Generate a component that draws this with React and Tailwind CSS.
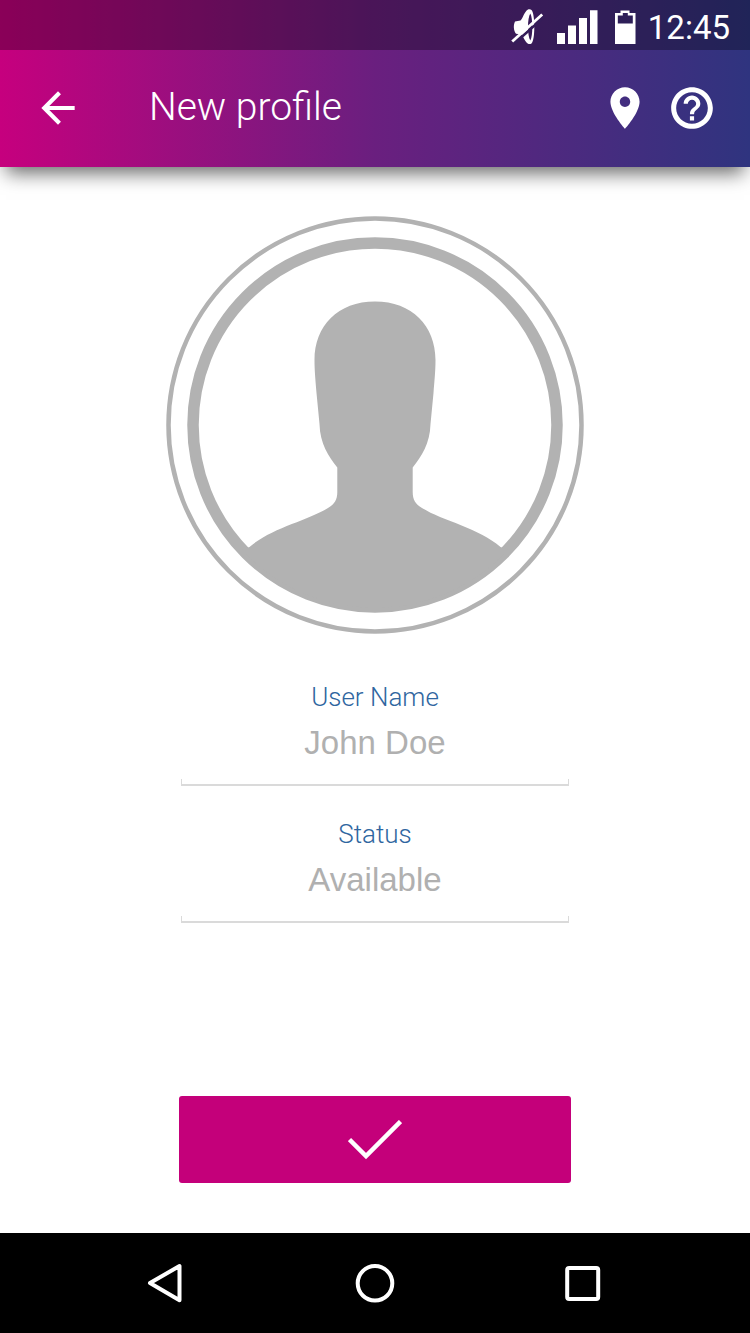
import React from "react";

function MuteIcon() {
  return (
    <svg viewBox="0 0 34 36" className="h-9 w-[34px]" aria-hidden="true">
      <path
        fill="white"
        fillRule="evenodd"
        d="M4 12.500L9.500 11.500C12 9.500 13 3 17 .6C18 .2 19.500 .2 20.500 1C22.500 3.500 23.300 10 23.300 18C23.300 26 22.500 32 20.500 34.500C19.500 35.200 18 35.200 17 34.700C13.500 32.500 12.500 27.500 10.500 25.500L5 24.800C2.500 21.500 2.200 16 4 12.500ZM19.300 4.500C17.800 7 17 12 17 18C17 24 17.800 29 19.300 31.500C20.700 29 21.300 24 21.300 18C21.300 12 20.700 7 19.300 4.500Z"
      />
      <path d="M2.800 35L33 8" stroke="#351d59" strokeWidth="2.500" />
      <path d="M1.200 32.500L31.200 5.500" stroke="white" strokeWidth="2.800" />
    </svg>
  );
}

function SignalIcon() {
  return (
    <svg viewBox="0 0 41 34" className="h-[34px] w-[41px]" fill="white" aria-hidden="true">
      <path d="M0 23h8v11H0zM11 15.500h8V34h-8zM22 8h8v26h-8zM33 0.300h7.500V34H33z" />
    </svg>
  );
}

function BatteryIcon() {
  return (
    <svg viewBox="0 0 21 34" className="h-[34px] w-[21px]" fill="white" fillRule="evenodd" aria-hidden="true">
      <path d="M5.500 0.500h9v2.500h6V34H0V3h5.500zM2.800 5.500v8h15v-8h-5V3h-5v2.500z" />
    </svg>
  );
}

function StatusBar() {
  return (
    <div className="flex h-[50px] items-center justify-end bg-black/30 pt-1 pr-5 text-white">
      <MuteIcon />
      <div className="ml-3 flex items-center gap-[17px]">
        <SignalIcon />
        <BatteryIcon />
      </div>
      <time className="ml-3 font-['Roboto',sans-serif] text-[33px] leading-none">12:45</time>
    </div>
  );
}

function Toolbar() {
  return (
    <header className="flex h-[117px] items-center px-[33px] pb-0.5 text-white">
      <button type="button" aria-label="Back">
        <svg viewBox="0 0 24 24" className="size-[50px]" fill="currentColor" aria-hidden="true">
          <path d="M20 11H7.830l5.590-5.590L12 4l-8 8 8 8 1.410-1.410L7.830 13H20v-2z" />
        </svg>
      </button>
      <h1 className="ml-[66px] flex-1 font-['Roboto',sans-serif] text-[39px] leading-none font-light">New profile</h1>
      <div className="flex items-center gap-[17px]">
        <button type="button" aria-label="Location">
          <svg viewBox="0 0 24 24" className="size-[50px]" fill="currentColor" aria-hidden="true">
            <path d="M12 2C8.130 2 5 5.130 5 9c0 5.250 7 13 7 13s7-7.750 7-13c0-3.870-3.130-7-7-7zm0 9.500c-1.380 0-2.500-1.120-2.500-2.500s1.120-2.500 2.500-2.500 2.500 1.120 2.500 2.500-1.120 2.500-2.500 2.500z" />
          </svg>
        </button>
        <button type="button" aria-label="Help">
          <svg viewBox="0 0 24 24" className="size-[50px]" fill="currentColor" aria-hidden="true">
            <path d="M11 18h2v-2h-2v2zm1-16C6.480 2 2 6.480 2 12s4.480 10 10 10 10-4.480 10-10S17.520 2 12 2zm0 17.600c-4.190 0-7.600-3.410-7.600-7.600s3.410-7.600 7.600-7.600 7.600 3.410 7.600 7.600-3.410 7.600-7.600 7.600zm0-13.600c-2.210 0-4 1.790-4 4h2c0-1.100.9-2 2-2s2 .9 2 2c0 2-3 1.750-3 5h2c0-2.250 3-2.500 3-5 0-2.210-1.790-4-4-4z" />
          </svg>
        </button>
      </div>
    </header>
  );
}

function Avatar() {
  return (
    <svg viewBox="0 0 418 418" className="w-full max-w-[418px]" role="img" aria-label="Profile photo">
      <circle cx="209" cy="209" r="206.500" fill="none" stroke="#b2b2b2" strokeWidth="4.500" />
      <circle cx="209" cy="209" r="182" fill="none" stroke="#b2b2b2" strokeWidth="11.500" />
      <path
        fill="#b2b2b2"
        d="M209 85.500C246 85.500 269.500 110 269.500 144C269.500 155 268.500 164 267.500 177L264.500 208C264 228 255.500 240 246.700 251.500V276C246.700 284 249.500 288 256 292C277 305 313 312 334.500 331L342 334A182 182 0 0 1 76 334L83.500 331C105 312 141 305 162 292C168.500 288 171.300 284 171.300 276V251.500C162.500 240 154 228 153.500 208L150.500 177C149.500 164 148.500 155 148.500 144C148.500 110 172 85.500 209 85.500Z"
      />
    </svg>
  );
}

function Field({ id, label, value }) {
  return (
    <div className="flex flex-col">
      <label htmlFor={id} className="mb-2 text-center font-['Roboto',sans-serif] text-[26px] leading-8 font-light text-[#2f66a0]">
        {label}
      </label>
      <input
        id={id}
        type="text"
        defaultValue={value}
        className="h-11 w-full bg-transparent text-center text-[33px] text-[#b0b0b0] outline-none"
      />
      <div className="mt-3.5 h-[7px] border-x border-b-2 border-[#dadada]" />
    </div>
  );
}

function NavBar() {
  return (
    <nav className="flex h-[100px] items-center justify-center gap-[168px] bg-black text-white">
      <button type="button" aria-label="Back">
        <svg viewBox="0 0 40 40" className="size-10" fill="none" stroke="currentColor" strokeWidth="4" strokeLinejoin="round" aria-hidden="true">
          <path d="M3 20L32.500 3V37.300Z" />
        </svg>
      </button>
      <button type="button" aria-label="Home">
        <svg viewBox="0 0 40 40" className="size-10" fill="none" stroke="currentColor" strokeWidth="4" aria-hidden="true">
          <circle cx="20" cy="20.300" r="17.300" />
        </svg>
      </button>
      <button type="button" aria-label="Recent apps">
        <svg viewBox="0 0 40 40" className="size-10" fill="none" stroke="currentColor" strokeWidth="4" strokeLinejoin="round" aria-hidden="true">
          <rect x="4.200" y="5" width="31" height="31" rx="2" />
        </svg>
      </button>
    </nav>
  );
}

export default function App() {
  return (
    <div className="flex min-h-screen flex-col bg-white font-['Liberation_Sans',Arial,sans-serif]">
      <div className="bg-linear-to-r/srgb from-[#c6007e] via-[#6a1f7f] to-[#2f347f] shadow-[0_12px_18px_-6px_rgba(0,0,0,0.6)]">
        <StatusBar />
        <Toolbar />
      </div>
      <main className="flex flex-1 flex-col items-center px-4 pt-[49px] pb-[50px]">
        <Avatar />
        <form className="mt-[47px] flex w-full flex-1 flex-col items-center" onSubmit={(e) => e.preventDefault()}>
          <div className="flex w-full max-w-[388px] flex-col gap-8">
            <Field id="user-name" label="User Name" value="John Doe" />
            <Field id="status" label="Status" value="Available" />
          </div>
          <button
            type="submit"
            aria-label="Save profile"
            className="mt-auto flex h-[87px] w-full max-w-[392px] items-center justify-center rounded-[3px] bg-[#c4007a] text-white"
          >
            <svg viewBox="0 0 54 40" className="h-10 w-[54px]" fill="none" stroke="currentColor" strokeWidth="4.500" aria-hidden="true">
              <path d="M1.500 19.500L18 36L52.500 1.500" />
            </svg>
          </button>
        </form>
      </main>
      <NavBar />
    </div>
  );
}
